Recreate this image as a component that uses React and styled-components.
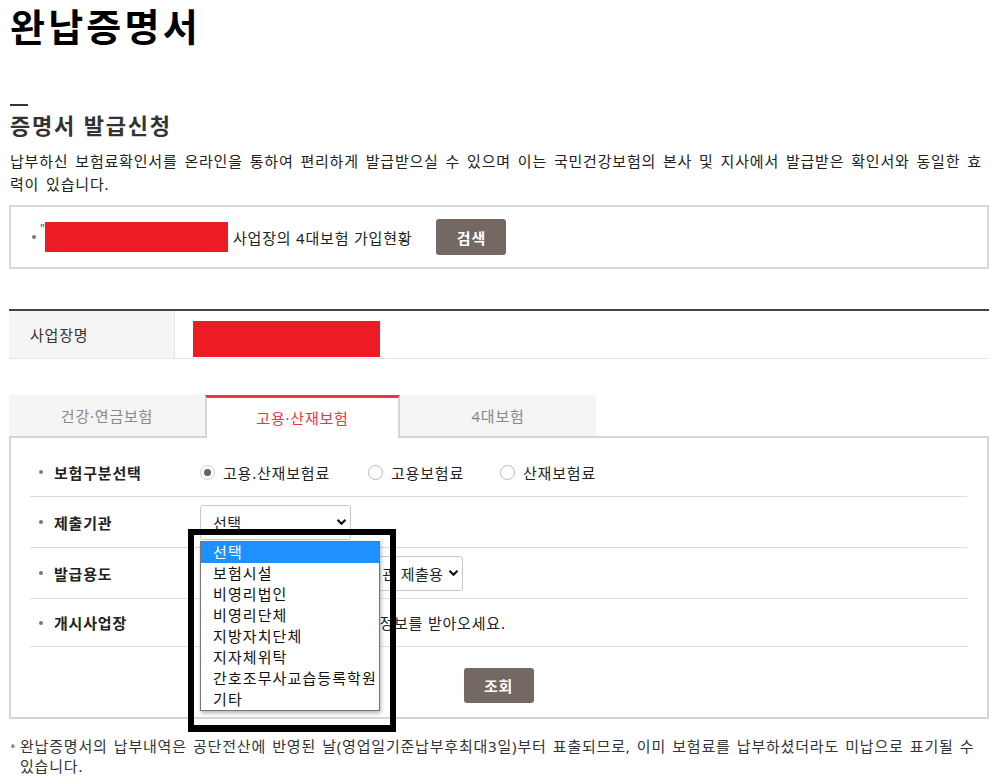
import React from 'react';
import styled, { createGlobalStyle } from 'styled-components';

const GlobalStyle = createGlobalStyle`
  html, body { margin: 0; padding: 0; background: #fff; }
  body {
    font-family: "Noto Sans", "Noto Sans CJK KR", sans-serif;
    color: #222;
    letter-spacing: 0.8px;
  }
  *, *::before, *::after { box-sizing: border-box; }
`;

const Page = styled.div`
  width: 980px;
  margin-left: 9px;
  padding-bottom: 10px;
`;

const Title = styled.h1`
  margin: 0;
  padding-left: 1px;
  font-size: 38px;
  line-height: 52px;
  font-weight: 700;
  color: #000;
  letter-spacing: 3.2px;
`;

const Dash = styled.div`
  width: 18px;
  height: 2px;
  margin: 52px 0 0 1px;
  background: #333;
`;

const SubTitle = styled.h2`
  margin: 4px 0 0;
  padding-left: 1px;
  font-size: 22px;
  line-height: 30px;
  font-weight: 700;
  color: #333;
  letter-spacing: 1.8px;
`;

const Intro = styled.p`
  margin: 10px 0 0;
  padding-left: 1px;
  font-size: 15px;
  line-height: 23px;
  word-spacing: 2.2px;
  color: #222;
`;

const SearchBox = styled.div`
  margin-top: 9px;
  height: 64px;
  border: 2px solid #d8d8d8;
  display: flex;
  align-items: center;
  padding-left: 21px;
`;

const Dot = styled.span`
  flex: none;
  width: 4px;
  height: 4px;
  border-radius: 50%;
  background: #777;
  margin-left: ${p => p.$ml || 0}px;
  margin-right: ${p => p.$mr || 0}px;
`;

const Quote = styled.span`
  font-size: 12px;
  line-height: 1;
  color: #555;
  align-self: flex-start;
  margin-top: 16px;
  width: 9px;
  text-align: right;
  letter-spacing: 0;
`;

const Redacted = styled.div`
  flex: none;
  width: ${p => p.$w}px;
  height: ${p => p.$h}px;
  background: #ed1c24;
  margin-left: ${p => p.$ml || 0}px;
  margin-top: ${p => p.$mt || 0}px;
`;

const SearchText = styled.span`
  margin-left: 5px;
  font-size: 15px;
  color: #222;
`;

const DarkButton = styled.button`
  flex: none;
  width: ${p => p.$w}px;
  height: ${p => p.$h}px;
  margin-left: ${p => p.$ml || 0}px;
  border: 0;
  border-radius: 3px;
  background: #736862;
  color: #fff;
  font-family: inherit;
  font-size: 15px;
  font-weight: 700;
  letter-spacing: 0.8px;
  cursor: pointer;
`;

const InfoTable = styled.div`
  margin-top: 40px;
  height: 50px;
  display: grid;
  grid-template-columns: 166px 1fr;
  border-top: 2px solid #444;
  border-bottom: 1px solid #e5e5e5;
`;

const InfoHead = styled.div`
  display: flex;
  align-items: center;
  padding-left: 21px;
  background: #f5f5f5;
  border-right: 1px solid #e5e5e5;
  font-size: 15px;
  color: #333;
`;

const InfoCell = styled.div`
  padding-left: 18px;
`;

const TabBar = styled.div`
  margin-top: 36px;
  display: flex;
  height: 41px;
  position: relative;
  z-index: 1;
`;

const Tab = styled.div`
  width: ${p => p.$w}px;
  height: ${p => (p.$active ? 43 : 41)}px;
  display: flex;
  align-items: center;
  justify-content: center;
  font-size: 15px;
  background: ${p => (p.$active ? '#fff' : '#f5f5f5')};
  color: ${p => (p.$active ? '#e8383d' : '#888')};
  border-top: ${p => (p.$active ? '3px solid #e8383d' : 'none')};
  border-left: ${p => (p.$active ? '2px solid #d5d5d5' : 'none')};
  border-right: ${p => (p.$active ? '2px solid #d5d5d5' : 'none')};
  padding-bottom: ${p => (p.$active ? 2 : 0)}px;
`;

const Panel = styled.div`
  border: 2px solid #d5d5d5;
  padding: 10px 20px 14px 19px;
`;

const Row = styled.div`
  height: ${p => p.$h}px;
  display: flex;
  align-items: center;
  border-bottom: 1px solid #dcdcdc;
  font-size: 15px;
`;

const Label = styled.div`
  flex: none;
  width: 170px;
  display: flex;
  align-items: center;
  font-weight: 700;
  color: #222;
`;

const RadioItem = styled.label`
  width: ${p => p.$w}px;
  display: flex;
  align-items: center;
  color: #222;
`;

const RadioCircle = styled.span`
  flex: none;
  width: 15px;
  height: 15px;
  margin-right: 8px;
  border-radius: 50%;
  border: 1px solid ${p => (p.$checked ? '#d0d0d0' : '#b8b8b8')};
  background: #fff;
  display: flex;
  align-items: center;
  justify-content: center;
  &::after {
    content: '';
    width: 7px;
    height: 7px;
    border-radius: 50%;
    background: ${p => (p.$checked ? '#6b605b' : 'transparent')};
  }
`;

const SelectWrap = styled.div`
  position: relative;
`;

const SelectBox = styled.div`
  width: ${p => p.$w}px;
  height: 35px;
  border: 1px solid #c8c8c8;
  border-radius: 3px;
  padding: 0 3px 0 12px;
  display: flex;
  align-items: center;
  font-size: 15px;
  color: #222;
  background: #fff;
  white-space: nowrap;
`;

const SelectText = styled.span`
  flex: 1;
  min-width: 0;
  overflow: hidden;
  letter-spacing: 0.4px;
`;

const Chevron = () => (
  <svg width="11" height="8" viewBox="0 0 11 8" style={{ flex: 'none' }}>
    <path d="M1.5 1.8 L5.5 5.8 L9.5 1.8" fill="none" stroke="#111" strokeWidth="2.2" />
  </svg>
);

const OptionList = styled.ul`
  position: absolute;
  left: 0;
  top: 36px;
  z-index: 5;
  width: 180px;
  margin: 0;
  padding: 0;
  list-style: none;
  background: #fff;
  border: 1px solid #767676;
  box-shadow: 1px 2px 4px rgba(0, 0, 0, 0.3);
`;

const Option = styled.li`
  height: 21px;
  line-height: 21px;
  padding-left: 12px;
  font-size: 15px;
  letter-spacing: 1.1px;
  white-space: nowrap;
  color: ${p => (p.$selected ? '#fff' : '#111')};
  background: ${p => (p.$selected ? '#1e90ff' : 'transparent')};
`;

const Highlight = styled.div`
  position: absolute;
  left: -12px;
  top: 24px;
  z-index: 6;
  width: 208px;
  height: 203px;
  border: 6px solid #000;
  border-bottom-width: 7px;
  pointer-events: none;
`;

const HelpText = styled.span`
  color: #222;
  white-space: nowrap;
`;

const ButtonRow = styled.div`
  margin-top: 21px;
  display: flex;
  justify-content: center;
`;

const Note = styled.div`
  margin-top: 17px;
  display: flex;
  font-size: 15px;
  line-height: 20px;
  word-spacing: 1.5px;
  color: #333;
`;

const NoteBullet = styled.span`
  flex: none;
  width: 11px;
  padding-left: 1px;
  color: #888;
`;

const organs = ['선택', '보험시설', '비영리법인', '비영리단체', '지방자치단체', '지자체위탁', '간호조무사교습등록학원', '기타'];

export default function App() {
  return (
    <>
      <GlobalStyle />
      <Page>
        <Title>완납증명서</Title>
        <Dash />
        <SubTitle>증명서 발급신청</SubTitle>
        <Intro>
          납부하신 보험료확인서를 온라인을 통하여 편리하게 발급받으실 수 있으며 이는 국민건강보험의 본사 및 지사에서 발급받은 확인서와 동일한 효력이 있습니다.
        </Intro>

        <SearchBox>
          <Dot />
          <Quote>"</Quote>
          <Redacted $w={183} $h={30} />
          <SearchText>사업장의 4대보험 가입현황</SearchText>
          <DarkButton $w={70} $h={36} $ml={24}>검색</DarkButton>
        </SearchBox>

        <InfoTable>
          <InfoHead>사업장명</InfoHead>
          <InfoCell>
            <Redacted $w={187} $h={36} $mt={10} />
          </InfoCell>
        </InfoTable>

        <TabBar>
          <Tab $w={196}>건강·연금보험</Tab>
          <Tab $w={195} $active>고용·산재보험</Tab>
          <Tab $w={196}>4대보험</Tab>
        </TabBar>
        <Panel>
          <Row $h={49}>
            <Label><Dot $ml={9} $mr={11} />보험구분선택</Label>
            <RadioItem $w={168}><RadioCircle $checked />고용.산재보험료</RadioItem>
            <RadioItem $w={132}><RadioCircle />고용보험료</RadioItem>
            <RadioItem $w={140}><RadioCircle />산재보험료</RadioItem>
          </Row>
          <Row $h={51}>
            <Label><Dot $ml={9} $mr={11} />제출기관</Label>
            <SelectWrap>
              <SelectBox $w={151}>
                <SelectText>선택</SelectText>
                <Chevron />
              </SelectBox>
              <OptionList>
                {organs.map((o, i) => (
                  <Option key={o} $selected={i === 0}>{o}</Option>
                ))}
              </OptionList>
              <Highlight />
            </SelectWrap>
          </Row>
          <Row $h={51}>
            <Label><Dot $ml={9} $mr={11} />발급용도</Label>
            <SelectBox $w={263}>
              <SelectText>관공서·금융기관 등 관계기관 제출용</SelectText>
              <Chevron />
            </SelectBox>
          </Row>
          <Row $h={48}>
            <Label><Dot $ml={9} $mr={11} />개시사업장</Label>
            <HelpText>상단 검색 버튼으로 사업장 정보를 받아오세요.</HelpText>
          </Row>
          <ButtonRow>
            <DarkButton $w={70} $h={35}>조회</DarkButton>
          </ButtonRow>
        </Panel>

        <Note>
          <NoteBullet>•</NoteBullet>
          <span>
            완납증명서의 납부내역은 공단전산에 반영된 날(영업일기준납부후최대3일)부터 표출되므로, 이미 보험료를 납부하셨더라도 미납으로 표기될 수 있습니다.
          </span>
        </Note>
      </Page>
    </>
  );
}
